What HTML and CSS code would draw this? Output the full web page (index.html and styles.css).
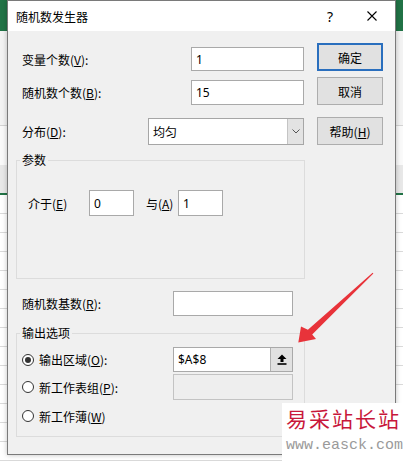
FILE: index.html
```html
<!DOCTYPE html>
<html lang="zh-CN">
<head>
<meta charset="utf-8">
<title>随机数发生器</title>
<link rel="stylesheet" href="styles.css">
</head>
<body>
<div class="backdrop">
  <div class="bd-green"></div>
  <div class="bd-ribbon"></div>
  <div class="bd-gap"></div>
  <div class="bd-head"></div>
  <div class="bd-sheet"></div>
</div>

<div class="dialog">
  <div class="titlebar">
    <span class="title">随机数发生器</span>
    <span class="tb-help">?</span>
    <span class="tb-close">
      <svg width="10" height="10" viewBox="0 0 10 10"><path d="M0.5 0.5 L9.5 9.5 M9.5 0.5 L0.5 9.5" stroke="#000" stroke-width="1.1" fill="none"/></svg>
    </span>
  </div>
  <div class="body">
    <div class="leftcol">
      <div class="row r1">
        <span class="lbl">变量个数(<u>V</u>):</span>
        <div class="input in-wide">1</div>
      </div>
      <div class="row r2">
        <span class="lbl">随机数个数(<u>B</u>):</span>
        <div class="input in-wide">15</div>
      </div>
      <div class="row r3">
        <span class="lbl">分布(<u>D</u>):</span>
        <div class="select">
          <span class="sel-text">均匀</span>
          <span class="sel-btn">
            <svg width="8" height="5" viewBox="0 0 8 5"><path d="M0.5 0.5 L4 4 L7.5 0.5" stroke="#555" stroke-width="1" fill="none"/></svg>
          </span>
        </div>
      </div>

      <fieldset class="group g1">
        <legend>参数</legend>
        <div class="g1-body">
          <span class="lbl lbl-between">介于(<u>E</u>)</span>
          <div class="input in-small">0</div>
          <span class="lbl lbl-and">与(<u>A</u>)</span>
          <div class="input in-small">1</div>
        </div>
      </fieldset>

      <div class="row r4">
        <span class="lbl">随机数基数(<u>R</u>):</span>
        <div class="input in-base"></div>
      </div>

      <fieldset class="group g2">
        <legend>输出选项</legend>
        <div class="g2-body">
          <div class="orow o1">
            <span class="radio checked"></span>
            <span class="lbl">输出区域(<u>O</u>):</span>
            <div class="input in-base ref">
              <span class="ref-text">$A$8</span>
              <span class="ref-btn">
                <svg width="10" height="11" viewBox="0 0 10 11"><path d="M5 0.5 L9.5 5 L6.5 5 L6.5 8 L3.5 8 L3.5 5 L0.5 5 Z" fill="#000"/><rect x="0.5" y="9.2" width="9" height="1.6" fill="#000"/></svg>
              </span>
            </div>
          </div>
          <div class="orow o2">
            <span class="radio"></span>
            <span class="lbl">新工作表组(<u>P</u>):</span>
            <div class="input in-base disabled"></div>
          </div>
          <div class="orow o3">
            <span class="radio"></span>
            <span class="lbl">新工作薄(<u>W</u>)</span>
          </div>
        </div>
      </fieldset>
    </div>

    <div class="rightcol">
      <div class="btn default">确定</div>
      <div class="btn b2">取消</div>
      <div class="btn b3">帮助(<u>H</u>)</div>
    </div>
  </div>
</div>

<svg class="arrow" width="403" height="462" viewBox="0 0 403 462">
  <polygon points="373.4,273.5 312.2,334.4 316,339 298.3,342.5 301,326.5 307.9,329.8 372.6,272.7" fill="#e8333a"/>
</svg>

<div class="watermark">
  <div class="wm-cn">易采站长站</div>
  <div class="wm-url">www.easck.com</div>
</div>
</body>
</html>
```

FILE: styles.css
```css
* { box-sizing: border-box; }

html, body {
  margin: 0;
  padding: 0;
}

body {
  width: 403px;
  height: 462px;
  overflow: hidden;
  position: relative;
  font-family: "Noto Sans CJK SC", "Noto Sans", sans-serif;
  font-size: 12px;
  color: #000;
  background: #fff;
}

u { text-decoration: underline; text-underline-offset: 1px; }

/* ---------- Excel backdrop ---------- */
.backdrop {
  display: flex;
  flex-direction: column;
  height: 462px;
}
.bd-green { height: 31px; background: #217346; }
.bd-ribbon { height: 95px; background: #f3f3f3; border-bottom: 1px solid #d4d4d4; }
.bd-gap { height: 39px; background: #fafafa; }
.bd-head { height: 30px; background: #e8e8e8; border-bottom: 2px solid #217346; }
.bd-sheet {
  flex: 1;
  background-color: #fff;
  background-image: repeating-linear-gradient(to bottom, transparent 0 18px, #dadada 18px 19px);
}

/* ---------- Dialog window ---------- */
.dialog {
  position: absolute;
  left: 7px;
  top: 0;
  width: 389px;
  height: 455px;
  border: 1px solid #7a7a7a;
  background: #f0f0f0;
  box-shadow: 0 0 5px rgba(0, 0, 0, 0.25);
  display: flex;
  flex-direction: column;
}

.titlebar {
  height: 30px;
  background: #fff;
  display: flex;
  align-items: center;
  padding-left: 8px;
  flex-shrink: 0;
}
.title { font-size: 12px; }
.tb-help {
  margin-left: auto;
  width: 38px;
  text-align: center;
  font-family: "Noto Sans", sans-serif;
  font-size: 14px;
}
.tb-close {
  width: 46px;
  display: flex;
  justify-content: center;
  align-items: center;
}

.body {
  display: flex;
  padding-left: 8px;
  gap: 12px;
}

.leftcol {
  width: 289px;
  display: flex;
  flex-direction: column;
}

.row {
  display: flex;
  align-items: center;
  padding-left: 6px;
}
.r1 { margin-top: 16px; height: 24px; }
.r2 { margin-top: 9px; height: 25px; }
.r3 { margin-top: 13px; height: 27px; }
.r4 { margin-top: 12px; height: 25px; }

.lbl { white-space: nowrap; }

.input {
  background: #fff;
  border: 1px solid #a9a9a9;
  height: 100%;
  display: flex;
  align-items: center;
  padding-left: 4px;
  font-family: "Noto Sans", "Noto Sans CJK SC", sans-serif;
  font-size: 12px;
}
.in-wide { margin-left: auto; margin-right: 1px; width: 113px; }
.in-base { margin-left: auto; margin-right: 12px; width: 120px; }
.in-small { width: 45px; height: 26px; }

.select {
  margin-left: auto;
  margin-right: 1px;
  width: 156px;
  height: 100%;
  border: 1px solid #a6a6a6;
  background: #fff;
  display: flex;
  align-items: center;
}
.sel-text { padding-left: 4px; flex: 1; }
.sel-btn {
  width: 16px;
  height: 100%;
  background: #e3e3e3;
  border-left: 1px solid #c4c4c4;
  display: flex;
  align-items: center;
  justify-content: center;
}

/* ---------- Group boxes ---------- */
.group {
  margin: 0;
  padding: 0;
  border: 1px solid #dcdcdc;
  min-width: 0;
}
.group legend {
  padding: 0 2px;
  margin-left: 3px;
  line-height: 14px;
  font-size: 12px;
}
.g1 { margin-top: 8px; }
.g1-body {
  display: flex;
  align-items: center;
  padding: 23px 0 62px 11px;
}
.lbl-between { width: 61px; }
.lbl-and { margin-left: 12px; width: 32px; }

.g2 { margin-top: 10px; }
.g2-body {
  padding: 7px 0 8px 5px;
  display: flex;
  flex-direction: column;
}
.orow {
  display: flex;
  align-items: center;
  gap: 5px;
}
.orow .in-base { margin-right: 11px; }
.o1 { height: 25px; }
.o2 { height: 26px; margin-top: 2px; }
.o3 { height: 24px; margin-top: 4px; }

.radio {
  width: 12px;
  height: 12px;
  border: 1px solid #333;
  border-radius: 50%;
  background: #fff;
  display: flex;
  align-items: center;
  justify-content: center;
  flex-shrink: 0;
}
.radio.checked::after {
  content: "";
  width: 6px;
  height: 6px;
  border-radius: 50%;
  background: #333;
}

.ref { padding-left: 0; }
.ref-text { padding-left: 4px; flex: 1; }
.ref-btn {
  width: 22px;
  height: 100%;
  background: #e1e1e1;
  border-left: 1px solid #b0b0b0;
  display: flex;
  align-items: center;
  justify-content: center;
}
.disabled {
  background: #eeeeee;
  border-color: #c3c3c3;
}

/* ---------- Buttons ---------- */
.rightcol {
  width: 66px;
  display: flex;
  flex-direction: column;
}
.btn {
  height: 28px;
  background: #e1e1e1;
  border: 1px solid #adadad;
  display: flex;
  align-items: center;
  justify-content: center;
}
.btn.default {
  margin-top: 12px;
  border: 2px solid #2a6fbe;
}
.b2 { margin-top: 6px; }
.b3 { margin-top: 12px; }

/* ---------- Overlays ---------- */
.arrow {
  position: absolute;
  left: 0;
  top: 0;
  pointer-events: none;
}

.watermark {
  position: absolute;
  left: 282px;
  top: 403px;
  width: 121px;
  height: 59px;
  background: #fff;
  padding-left: 4px;
  overflow: hidden;
}
.wm-cn {
  font-family: "Noto Sans CJK SC", serif;
  font-size: 21px;
  line-height: 30px;
  letter-spacing: 2px;
  color: #c8173b;
  white-space: nowrap;
}
.wm-url {
  font-family: "Liberation Mono", monospace;
  font-size: 15px;
  line-height: 26px;
  color: #9a9a9a;
  white-space: nowrap;
}
```
